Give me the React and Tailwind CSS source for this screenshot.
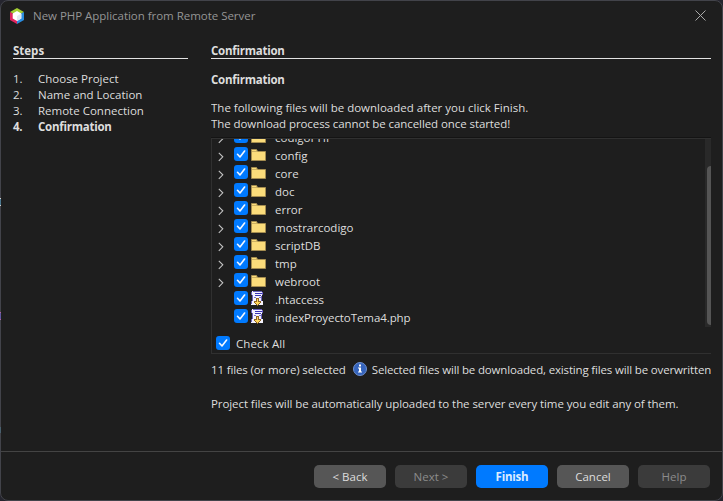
const FOLDERS = ['codigoPHP', 'config', 'core', 'doc', 'error', 'mostrarcodigo', 'scriptDB', 'tmp', 'webroot'];
const FILES = ['.htaccess', 'indexProyectoTema4.php'];

function Check() {
  return (
    <svg className="block h-[14px] w-[14px] shrink-0" viewBox="0 0 14 14">
      <rect width="14" height="14" rx="3" fill="#007aff" />
      <path d="M3.500 7.300 6 10 10.600 4" fill="none" stroke="#f4f8ff" strokeWidth="1.600" strokeLinecap="round" strokeLinejoin="round" />
    </svg>
  );
}

function Folder() {
  return (
    <svg className="block h-[12px] w-[15px] shrink-0" viewBox="0 0 15 12">
      <path d="M.5 11.500V.500h5l1 2h8v9z" fill="#fbdc7b" stroke="#a58d50" />
      <path d="M1 2.500h5.500" stroke="#cdb061" />
    </svg>
  );
}

function PhpFile() {
  return (
    <svg className="block h-[15px] w-[13px] shrink-0" viewBox="0 0 13 15" shapeRendering="crispEdges">
      <path d="M1 0h10v1h1v3h-1v6h1v4H0v-4h1V4H0V1h1z" fill="#f4f3fd" />
      <path d="M2 .500h9M11.500 1v3M1.500 4v6M.5 1v3M.5 10v3M10.500 5v5" stroke="#6a60bd" fill="none" />
      <path d="M4 2.500h7M4 4.500h6" stroke="#3a34b4" />
      <path d="M3 6.500h2M8 6.500h2" stroke="#7a74cc" />
      <path d="M5 7h3v3h2v2H9v1H8v1H7v1H6v-1H5v-1H4v-1H3v-2h2z" fill="#8f6322" />
      <path d="M6 8h1v3h2v1H8v1H7v1H6v-1H5v-1H4v-1h2z" fill="#ffd65c" />
    </svg>
  );
}

function Chevron() {
  return (
    <svg className="block h-[10px] w-[6px]" viewBox="0 0 6 10">
      <path d="M.8.800 4.800 4.800 .8 8.800" fill="none" stroke="#c4c4c4" strokeWidth="1.100" />
    </svg>
  );
}

function Row({ name, file }) {
  return (
    <div className="flex h-[18px] items-start pl-[5px]">
      <div className="w-[17px] pt-[5px] pl-px">{!file && <Chevron />}</div>
      <Check />
      <div className={file ? 'ml-[3px] w-[24px]' : 'ml-[3px] w-[24px] pt-[2px]'}>{file ? <PhpFile /> : <Folder />}</div>
      <span className={name.length > 20 ? 'leading-[18px] tracking-[-0.08px]' : 'leading-[18px]'}>{name}</span>
    </div>
  );
}

function Btn({ children, kind }) {
  const look = {
    normal: 'bg-[#565656] text-[#dddddd]',
    off: 'bg-[#3b3b3b] text-[#8c8c8c]',
    main: 'bg-[#007aff] text-[#dcecff] font-bold tracking-[-0.2px]',
  }[kind];
  return <button className={'flex h-[23px] w-[72px] items-center justify-center rounded-[5px] ' + look}>{children}</button>;
}

function Logo() {
  return (
    <svg className="h-[16px] w-[14px]" viewBox="0 0 14 16">
      <path d="M7 0 14 4 7 8 0 4z" fill="#a4cf33" />
      <path d="M0 4 7 8v8l-7-4z" fill="#e0245e" />
      <path d="M14 4 7 8v8l7-4z" fill="#2a8de0" />
      <path d="M7 3 11.300 5.500v5L7 13l-4.300-2.500v-5z" fill="#fff" />
      <path d="M7 8l4.300-2.500v5L7 13z" fill="#e2eaf0" />
    </svg>
  );
}

export default function App() {
  return (
    <div className="relative h-[501px] w-[723px] overflow-hidden bg-[#25252e] font-['Open_Sans','Noto_Sans',sans-serif] text-[11.5px] whitespace-nowrap text-[#dddddd]">
      <div className="flex h-[501px] w-[723px] flex-col rounded-[8px] border border-[#42434a] bg-[#1e1e1e]">
        <header className="flex h-[29px] shrink-0 items-center pl-[9px] text-[#959595]">
          <Logo />
          <span className="ml-[9px] tracking-[-0.03px]">New PHP Application from Remote Server</span>
          <svg className="mr-[16px] mb-px ml-auto h-[11px] w-[11px]" viewBox="0 0 11 11">
            <path d="M.5.500l10 10M10.500.500l-10 10" stroke="#aaa" />
          </svg>
        </header>
        <main className="flex h-[421px] shrink-0 pl-[12px]">
          <section className="w-[175px]">
            <h2 className="mt-[12px] h-[17px] border-b border-[#e2e2e2] leading-[18px] font-bold">Steps</h2>
            <ol className="mt-[12px] leading-[16px]">
              {['Choose Project', 'Name and Location', 'Remote Connection', 'Confirmation'].map((s, i) => (
                <li key={s} className={i === 3 ? 'flex font-bold tracking-[-0.25px]' : 'flex'}>
                  <span className="w-[25px]">{i + 1}.</span>
                  <span>{s}</span>
                </li>
              ))}
            </ol>
          </section>
          <section className="ml-[23px] w-[500px] overflow-hidden">
            <h2 className="mt-[12px] h-[17px] border-b border-[#e2e2e2] leading-[18px] font-bold tracking-[-0.25px]">Confirmation</h2>
            <h3 className="mt-[13px] leading-[16px] font-bold tracking-[-0.25px]">Confirmation</h3>
            <p className="mt-[12px] leading-[16px]">The following files will be downloaded after you click Finish.</p>
            <p className="leading-[16px] tracking-[-0.08px]">The download process cannot be cancelled once started!</p>
            <div className="mt-[5px] border-t border-[#141414]">
              <div className="flex h-[190px] overflow-hidden border-t border-l border-[#303030]">
                <div className="-mt-[10px] flex-1">
                  {FOLDERS.map((n) => <Row key={n} name={n} />)}
                  {FILES.map((n) => <Row key={n} name={n} file />)}
                </div>
                <div className="h-[188px] w-[6px] bg-[#292929] pt-[27px] pl-[2px]">
                  <div className="h-[159px] rounded-l-[4px] bg-[#555555]" />
                </div>
              </div>
            </div>
            <div className="flex h-[26px] items-start border-b border-l border-[#303030] pt-[8px] pl-[4px]">
              <Check />
              <span className="ml-[6px] leading-[16px] tracking-[0.1px]">Check All</span>
            </div>
            <div className="mt-[7px] flex h-[18px] items-center">
              <span className="tracking-[-0.13px]">11 files (or more) selected</span>
              <svg className="mb-[2px] ml-[7px] h-[14px] w-[14px] shrink-0" viewBox="0 0 14 14">
                <circle cx="7" cy="7" r="6.500" fill="#3564bd" stroke="#6f90cf" />
                <path d="M6 2.500h2v2H6zM5 5.500h3v4h1v1H5v-1h1v-3H5z" fill="#fff" />
              </svg>
              <span className="ml-[5px] tracking-[-0.16px]">Selected files will be downloaded, existing files will be overwritten.</span>
            </div>
            <p className="mt-[17px] leading-[16px] tracking-[-0.08px]">Project files will be automatically uploaded to the server every time you edit any of them.</p>
          </section>
        </main>
        <footer className="flex flex-1 items-start justify-end gap-[9px] border-t border-[#444444] pt-[13px] pr-[12px]">
          <Btn kind="normal">&lt; Back</Btn>
          <Btn kind="off">Next &gt;</Btn>
          <Btn kind="main">Finish</Btn>
          <Btn kind="normal">Cancel</Btn>
          <Btn kind="off">Help</Btn>
        </footer>
      </div>
      {/* slivers of the window behind the dialog */}
      <div className="absolute top-[198px] left-0 h-[8px] w-px border-y border-[#d0d0d0] bg-[#4a7890]" />
      <div className="absolute top-[312px] left-0 h-[8px] w-px border-y border-[#b060a0] bg-[#6058a0]" />
      <div className="absolute top-[427px] left-0 h-[6px] w-px bg-[#48606e]" />
    </div>
  );
}
